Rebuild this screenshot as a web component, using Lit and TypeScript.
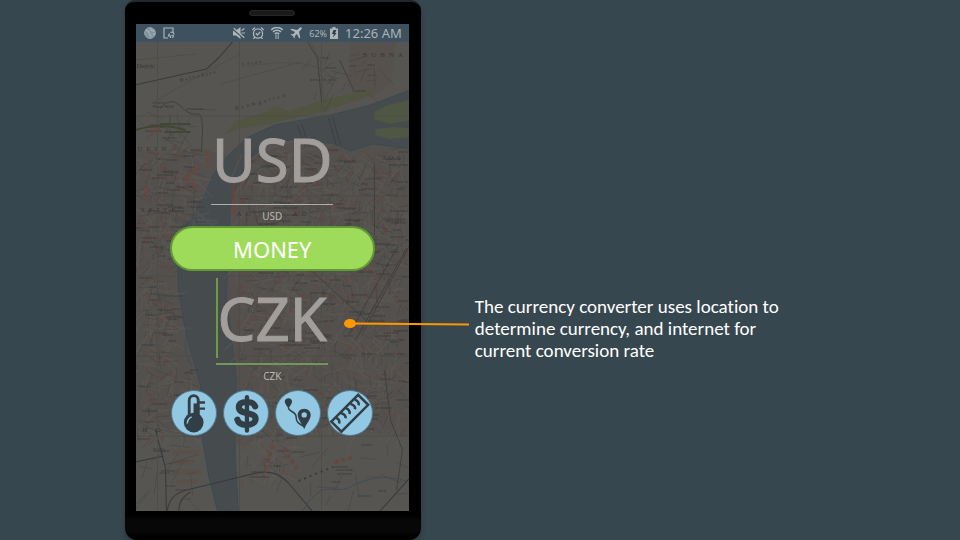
import { LitElement, html, svg, css } from "lit";
import { customElement, property } from "lit/decorators.js";

/** Small deterministic generator, so the street pattern is the same on each load. */
function makeRandom(seed: number) {
  let s = seed;
  return () => {
    s = (s * 16807) % 2147483647;
    return s / 2147483647;
  };
}

type Area = [x: number, y: number, w: number, h: number, count: number];

function streets(areas: Area[], seed: number, min: number, max: number) {
  const r = makeRandom(seed);
  let d = "";
  for (const [x, y, w, h, count] of areas) {
    for (let i = 0; i < count; i++) {
      const a = (r() < 0.5 ? 0.3 : 1.9) + (r() - 0.5) * 1.2;
      const len = min + r() * (max - min);
      const px = x + r() * w;
      const py = y + r() * h;
      d += `M${px.toFixed(1)} ${py.toFixed(1)}l${(Math.cos(a) * len).toFixed(1)} ${(Math.sin(a) * len).toFixed(1)}`;
    }
  }
  return d;
}

function captions(areas: Area[], seed: number) {
  const r = makeRandom(seed);
  let d = "";
  for (const [x, y, w, h, count] of areas) {
    for (let i = 0; i < count; i++) {
      d += `M${(x + r() * w).toFixed(0)} ${(y + r() * h).toFixed(0)}h${(6 + r() * 12).toFixed(0)}`;
    }
  }
  return d;
}

const TOWN: Area[] = [
  [135, 145, 60, 90, 70],
  [240, 150, 165, 80, 170],
  [236, 230, 170, 130, 220],
  [135, 235, 38, 130, 60],
  [242, 360, 164, 70, 90],
  [135, 365, 58, 75, 40],
  [242, 430, 50, 50, 20],
];
const SPARSE: Area[] = [
  [310, 50, 70, 45, 22],
  [135, 100, 70, 40, 16],
  [135, 440, 58, 60, 18],
  [300, 440, 105, 60, 14],
];

@customElement("city-map")
export class CityMap extends LitElement {
  static styles = css`
    :host { display: block; }
    svg { display: block; width: 100%; height: 100%; }
    .thin { fill: none; stroke: #3b3b3c; stroke-width: 0.8; }
    .road { fill: none; stroke: #393b3d; stroke-width: 1.1; }
    .faint { fill: none; stroke: #4c4c48; stroke-width: 0.8; }
    .light { fill: none; stroke: #625e59; stroke-width: 1.6; }
    .blocks { fill: none; stroke: #67453f; stroke-width: 2; opacity: 0.45; }
    .captions { fill: none; stroke: #2f2f31; stroke-width: 1.6; stroke-dasharray: 2 0.7; opacity: 0.45; }
    .water { fill: #464c4e; stroke: #3c4a53; stroke-width: 1; }
    .park { fill: #505440; }
    .island { fill: #4f5744; }
    .name { fill: #373636; font-family: "Liberation Serif", serif; font-size: 7px; }
    .small { fill: #343434; font-family: "Liberation Serif", serif; font-size: 5px; }
  `;

  render() {
    return html`<svg viewBox="135 42 274 469" preserveAspectRatio="xMidYMid slice" aria-hidden="true">
      <rect x="100" y="0" width="400" height="540" fill="#565551" />
      <path d="M100 152L205 150 240 160 300 140 440 148V440L300 425 240 445 100 420Z" fill="#53504d" />
      <path d="M350 42h45l-4 40-20 16-24-12z" fill="#57514e" />
      <path class="park" d="M224 134l12-13 30-9 8-6 14 5 32-10 40-10 16-3-12 10-44 14-52 12-30 5z" />
      <path class="water" d="M412 89L370 105 330 115 274 125 246 138 228 155 212 176 204 196 188 222 177 242
        178 290 184 325 190 350 200 385 202 440 208 475 218 515H238L236 480 234 430 236 380 230 330 226 300
        228 240 230 205 240 176 252 156 272 142 300 139 335 144 350 151 372 144 412 149Z" />
      <path class="island" d="M374 112l14-7 24-6v21l-23 4-16-5zM375 129l20-2 17 2v8l-23 2-14-4z" />
      ${svg`
        <path class="blocks" d="${streets(TOWN, 91, 2, 8)}" />
        <path class="light" d="${streets(TOWN, 37, 10, 26)}" opacity="0.4" />
        <path class="thin" d="${streets(TOWN, 11, 4, 18)}" opacity="0.42" />
        <path class="thin" d="${streets(SPARSE, 23, 8, 26)}" opacity="0.45" />
        <path class="captions" d="${captions(TOWN.map(([x, y, w, h, c]) => [x, y, w, h, c / 3] as Area), 7)}" />
        <path class="captions" d="${captions(SPARSE.map(([x, y, w, h]) => [x, y, w - 8, h, 7] as Area), 5)}" />
      `}
      <path class="road" d="M130 86L170 77 206 69 218 58 232 42" />
      <path class="road" d="M166 515c2-18 10-22 20-25l70-17c16-3 24 2 32 10l27 32M178 515c0-14 4-18 12-23M135 462l28-6M155 430l10 38 1 47M412 475l-36 40" />
      <path class="faint" d="M130 116H412M130 196H412M130 276H412M130 356H412M130 436H412M157 42V515M239 42V515M321 42V515
        M135 60l60-6M150 104q50-30 90-50M220 84l80-22M250 66q60-10 80 10M310 42l10 20 5 60" />
      <path class="thin" d="M160 108q10-12 20-2t16 8 6 16l-1 22M307 42l10 16 4 44M339 60l14 30M297 125l8 22M301 124l8 23M328 118l8 28M332 117l8 28
        M374 165v70M310 270l55 50M405 250l-50 90M398 245l-50 90M412 240l-48 90M384 370l6 50 12 30-6 40" />
      <path d="M302 511q14-24 28-22t20-2 20-8 36 2M186 222q-12 20-5 40t4 90l6 14M228 160q-14 20-22 40" fill="none" stroke="#3d4d58" />
      <path d="M135 130q24-8 50 0M160 124h30M164 132h26" fill="none" stroke="#414735" stroke-width="2" />
      <path d="M284 448l14 24M334 462l20-5M272 445l-8 28" fill="none" stroke="#6c423b" stroke-width="4" stroke-dasharray="4 3" opacity="0.7" />
      <path d="M298 481l34-14" fill="none" stroke="#3b3a39" stroke-width="2" stroke-dasharray="2 4" />
      <path d="M146 186v14M233 183v30M207 150v16M184 182l14-16M150 134l10-6M192 182l4 8" fill="none" stroke="#70463b" stroke-width="4" opacity="0.55" />
      <path d="M172 452h26M172 462h22M174 472h26M176 482h20" fill="none" stroke="#60493f" stroke-width="5" opacity="0.4" />
      <g class="name">
        <text x="362" y="57" letter-spacing="4">BUBNA</text>
        <text x="137" y="151" letter-spacing="4">ULIN</text>
        <text x="140" y="212" letter-spacing="4">SEITE</text>
        <text x="136" y="68">Dejvic</text>
        <text x="382" y="160" letter-spacing="3">JOS</text>
        <text x="236" y="216" letter-spacing="4">AL</text>
        <text x="292" y="216" letter-spacing="4">AD</text>
        <text x="142" y="432" letter-spacing="8">HO</text>
      </g>
      <g class="small">
        <text transform="translate(180 82) rotate(-14)" letter-spacing="2">Belvedere</text>
        <text transform="translate(235 110) rotate(-15)" letter-spacing="3">Baumgarten</text>
        <text transform="translate(242 66) rotate(-9)" letter-spacing="2">Letna</text>
        <text x="152" y="108">Neue Welt</text>
      </g>
    </svg>`;
  }
}

@customElement("status-bar")
export class StatusBar extends LitElement {
  static styles = css`
    :host {
      display: flex;
      align-items: center;
      gap: 7px;
      height: 18px;
      padding: 0 7px 0 8px;
      background: #3e515e;
      color: #abb5ba;
      font-family: "Noto Sans", sans-serif;
    }
    svg { width: 12px; height: 12px; flex: none; fill: none; stroke: currentColor; }
    .solid { fill: currentColor; stroke: none; }
    .push { margin-left: auto; }
    .power { display: flex; align-items: center; gap: 3px; }
    .percent { font-size: 9px; }
    .battery { width: 8px; }
    .time { font-size: 13px; line-height: 18px; white-space: nowrap; }
  `;

  render() {
    return html`
      <svg viewBox="0 0 12 12"><circle cx="6" cy="6" r="5.4" fill="#7e959f" stroke-width="0.8" /><path d="M2 3.5c2 0 3 1 3 2.500s2 1 2 4M7 1.500c-1 2 1 2.500 3.500 2.500M9 6.500l1.500 1.500" stroke-width="1.100" /></svg>
      <svg viewBox="0 0 12 12"><path d="M10 5V1H1v10h4M6.500 6.500L5.500 9h2v2M7.500 5.500c2-1 3.500.500 3.500 2M8.500 8l2 .8-1 2.200" stroke-width="1.200" /></svg>
      <svg class="push" viewBox="0 0 12 12"><path class="solid" d="M0 3.500H3L7.500 0v12L3 8.500H0z" /><path d="M0 2.200l11 9.300" stroke="#3e515e" stroke-width="1.500" /><path d="M.8 1.200l10.500 9.500M8.500 3.500L11.500 1.500M8.500 6H12" stroke-width="1.200" /></svg>
      <svg viewBox="0 0 12 12"><circle cx="6" cy="6.500" r="4.600" stroke-width="1.300" /><path d="M3.800 6.300l1.700 1.700 2.700-3.200M.3 3L3 .6M11.700 3L9 .6M2.800 10L1.500 12M9.200 10l1.300 2" stroke-width="1.300" /></svg>
      <svg viewBox="0 0 12 12"><path d="M.2 3C3.500-.3 8.500-.3 11.800 3M2 5c2.200-2.300 5.800-2.300 8 0M3.800 7c1.200-1.300 3.200-1.300 4.400 0" stroke-width="1.600" /><path d="M5 7.500v4.500M7.200 7.500v4.500" stroke-width="1" /></svg>
      <svg viewBox="0 0 12 12"><path class="solid" d="M11.500.5c.6.600.2 1.500-.5 2.200L9 4.700l1.300 6-1 .9-2.400-4.700-2.100 2 .2 1.700-.8.800L3 9 .6 7.800l.8-.8 1.700.2 2-2.100L.4 2.700l.9-1 6 1.300 2-2C10 .3 10.900-.1 11.500.5z" stroke="currentColor" stroke-width="0.5" /></svg>
      <span class="power">
        <span class="percent">62%</span>
        <svg class="battery" viewBox="0 0 8 12"><path class="solid" d="M2.500 0h3v1.500H8V12H0V1.500h2.500z" /><path d="M3.500 3h3L5 6h1.500L3 10.500 3.800 7H2z" fill="#2e3f4a" stroke="none" /></svg>
      </span>
      <span class="time">12:26 AM</span>
    `;
  }
}

@customElement("currency-field")
export class CurrencyField extends LitElement {
  @property() code = "";
  @property({ type: Boolean, reflect: true }) active = false;

  static styles = css`
    :host { display: flex; flex-direction: column; align-items: center; gap: 4px; }
    .box { position: relative; width: 122px; }
    :host([active]) .box { width: 112px; }
    input {
      display: block;
      box-sizing: content-box;
      width: 100%;
      height: 80px;
      margin: 0;
      padding: 0 0 5px;
      border: 0;
      border-bottom: 1px solid #aeb0ae;
      outline: none;
      background: none;
      color: #a29e9c;
      font: 60px/80px "Noto Sans", sans-serif;
      -webkit-text-stroke: 1px #a29e9c;
      text-align: center;
    }
    :host([active]) input { border-bottom: 2px solid #71985a; }
    .caret { position: absolute; left: 0; top: 0; width: 2px; height: 80px; background: #6e9a42; }
    label { color: #b8b8b6; font: 10px/14px "Noto Sans", sans-serif; }
  `;

  render() {
    return html`
      <div class="box">
        <input id="code" type="text" .value=${this.code} />
        ${this.active ? html`<span class="caret"></span>` : null}
      </div>
      <label for="code">${this.code}</label>
    `;
  }
}

const TOOLS = [
  {
    name: "Temperature",
    icon: svg`<path d="M18 28V9.500a4.700 4.700 0 0 1 9.400 0V28" fill="none" stroke="#323e45" stroke-width="3" />
      <path d="M22.500 13h6v16h-6z" fill="#323e45" /><circle cx="22.700" cy="33" r="10.300" fill="#323e45" />
      <path d="M27 12h7.500M27 18.500h7.500" stroke="#323e45" stroke-width="2.400" />
      <path d="M16 34c0-4 1.500-5.500 4.500-7" fill="none" stroke="#93c8e2" stroke-width="1.500" />`,
  },
  {
    name: "Money",
    icon: svg`<path d="M32.500 16C31 12.500 28 11.500 24 11.500c-5.500 0-8.500 2-8.500 5.500 0 8.500 17.500 4 17.500 12 0 4-4 6.500-9.500 6.500-5 0-8.500-2-9.500-5.500" fill="none" stroke="#323e45" stroke-width="6.500" stroke-linecap="round" />
      <path d="M24 6.500V41.500" stroke="#323e45" stroke-width="4.500" stroke-linecap="round" />`,
  },
  {
    name: "Distance",
    icon: svg`<path fill="#323e45" d="M13 7.500c2.300 0 3.800 1.600 3.800 3.600 0 2.300-2 4-3.800 7.400-1.800-3.400-3.800-5.100-3.800-7.400 0-2 1.500-3.600 3.800-3.600z" />
      <path d="M13 18c.5 4 8 3 8 9 0 5 2 7 8 10" fill="none" stroke="#323e45" stroke-width="1.600" />
      <path fill-rule="evenodd" fill="#323e45" d="M29.500 18.500c4 0 6.800 2.900 6.800 6.500 0 4.500-4.300 8.500-6.800 15-2.500-6.500-6.800-10.500-6.800-15 0-3.600 2.800-6.500 6.800-6.500zm0 3.700a2.800 2.800 0 1 0 0 5.600 2.800 2.800 0 0 0 0-5.600z" />`,
  },
  {
    name: "Length",
    icon: svg`<path d="M3.500 32L31.500 4 42 14.500 14 42.500z" fill="none" stroke="#323e45" stroke-width="2.600" />
      <path d="M8.500 28q4.500 2 3 6M13.500 23q6 2 4.500 5.500M18.500 18q5 2 4 6M23.500 13.500q6 2 4.500 5.500M28 9q5 2 4 6" fill="none" stroke="#323e45" stroke-width="2.600" />`,
  },
];

@customElement("app-root")
export class AppRoot extends LitElement {
  static styles = css`
    :host {
      display: flex;
      align-items: stretch;
      min-height: 100vh;
      box-sizing: border-box;
      padding-left: 13%;
      background: #37474f;
    }
    .phone {
      display: flex;
      flex-direction: column;
      box-sizing: border-box;
      flex: none;
      width: 31%;
      min-width: 296px;
      padding: 0 12px 0 11px;
      border-top: 2px solid #20282c;
      border-radius: 10px 10px 12px 12px;
      background: linear-gradient(to top, #000 4px, #070707 8px, #070707 20px, #000 24px);
      box-shadow: 0 4px 4px #2a363c;
    }
    .top { display: grid; place-items: center; height: 22px; }
    .speaker { width: 44px; height: 4px; border: 1px solid #262626; border-radius: 3px; background: #1a1a1a; }
    .screen { display: flex; flex-direction: column; flex: 1; margin-bottom: 29px; }
    .stage { position: relative; flex: 1; overflow: hidden; }
    .map { position: absolute; inset: 0; }
    .form {
      position: relative;
      display: flex;
      flex-direction: column;
      align-items: center;
      padding: 77px 0 48px;
    }
    .convert {
      box-sizing: border-box;
      width: 205px;
      height: 45px;
      margin: 3px 0 7px;
      padding: 0;
      border: 2px solid #619a35;
      border-radius: 23px;
      background: #9fdb5a;
      color: #fff;
      font: 22px/30px "Noto Sans", sans-serif;
    }
    .tools { display: flex; gap: 6px; margin-top: 7px; }
    .tool {
      width: 46px;
      height: 46px;
      padding: 0;
      border: 1px solid #4c7b92;
      border-radius: 50%;
      background: #93c8e2;
    }
    .tool svg { display: block; width: 44px; height: 44px; overflow: visible; }
    .note {
      position: relative;
      align-self: flex-start;
      margin: 296px 16px 16px 54px;
      width: 310px;
      color: #fff;
      font: 19px/22px Carlito, Lato, sans-serif;
      font-variant-ligatures: none;
    }
    .note p { margin: 0; }
    .pointer { position: absolute; right: 100%; top: 20px; margin-right: 6px; width: 127px; height: 16px; overflow: visible; }
  `;

  render() {
    return html`
      <section class="phone">
        <div class="top"><div class="speaker"></div></div>
        <div class="screen">
          <status-bar></status-bar>
          <div class="stage">
            <city-map class="map"></city-map>
            <div class="form">
              <currency-field code="USD"></currency-field>
              <button class="convert">MONEY</button>
              <currency-field code="CZK" active></currency-field>
              <div class="tools">
                ${TOOLS.map(
                  (t) => html`<button class="tool" aria-label=${t.name}>
                    <svg viewBox="0 0 46 46">${t.icon}</svg>
                  </button>`
                )}
              </div>
            </div>
          </div>
        </div>
      </section>
      <aside class="note">
        <svg class="pointer" viewBox="0 0 127 16" aria-hidden="true">
          <path d="M8 7.500L127 8.500" stroke="#ff9800" stroke-width="2" />
          <ellipse cx="8" cy="7.500" rx="6" ry="4.500" fill="#ff9800" />
        </svg>
        <p>The currency converter uses location to determine currency, and internet for current conversion rate</p>
      </aside>
    `;
  }
}
